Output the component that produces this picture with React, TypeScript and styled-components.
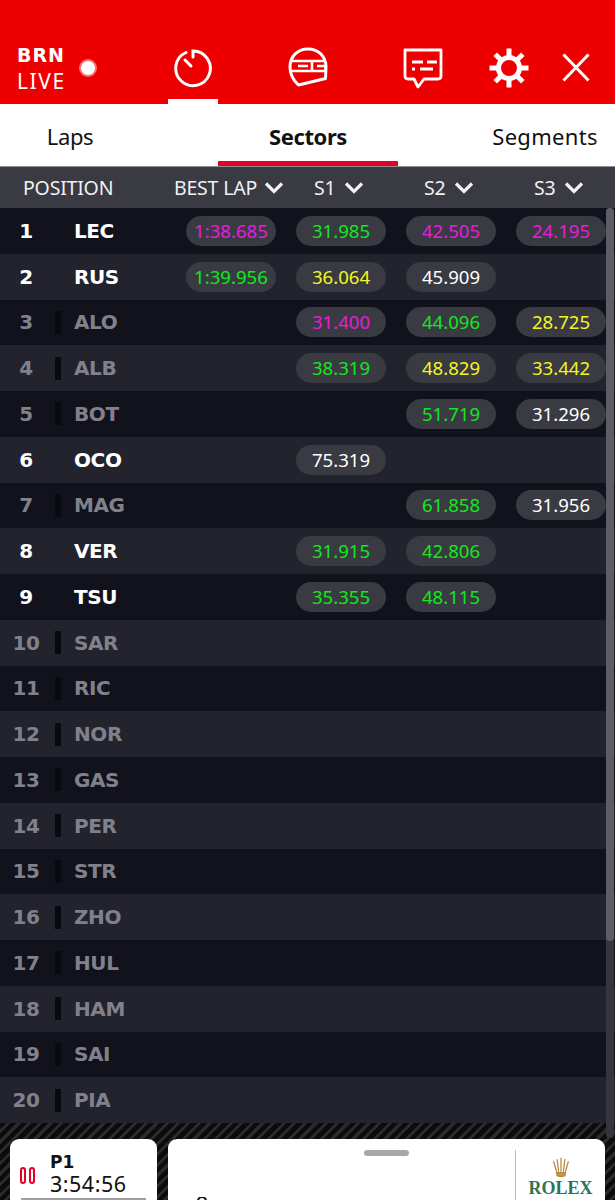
import React from "react";
import styled, { createGlobalStyle } from "styled-components";

const Global = createGlobalStyle`
  html, body { margin: 0; padding: 0; background: #11121c; }
  * { box-sizing: border-box; }
`;

const Page = styled.div`
  width: 615px;
  height: 1200px;
  overflow: hidden;
  position: relative;
  font-family: "Noto Sans", "Open Sans", sans-serif;
  display: flex;
  flex-direction: column;
`;

const Header = styled.header`
  height: 104px;
  background: #ee0000;
  display: flex;
  padding-top: 44px;
  flex: none;
`;

const Brand = styled.div`
  width: 168px;
  padding: 1px 0 0 17px;
  display: flex;
  gap: 15px;
  color: #fff;
`;

const BrandText = styled.div`
  display: flex;
  flex-direction: column;
  gap: 4px;
`;

const BrandCode = styled.span`
  font: 700 19px/20px "DejaVu Sans", sans-serif;
  letter-spacing: 1px;
`;

const BrandLive = styled.span`
  font: 400 21px/24px "Noto Sans", sans-serif;
  letter-spacing: 1.6px;
`;

const LiveDot = styled.span`
  width: 14px;
  height: 14px;
  margin-top: 16px;
  border-radius: 50%;
  background: #fff;
  box-shadow: 0 0 0 2px rgba(255, 255, 255, 0.45);
`;

const IconSlot = styled.div<{ $w: number; $ml?: number; $active?: boolean }>`
  width: ${(p) => p.$w}px;
  margin-left: ${(p) => p.$ml ?? 0}px;
  height: 60px;
  display: flex;
  justify-content: center;
  padding-top: 1px;
  position: relative;
  ${(p) =>
    p.$active &&
    `&::after { content: ""; position: absolute; left: 0; right: 0; bottom: 0; height: 5px; background: #fff; }`}
`;

const Tabs = styled.nav`
  height: 62px;
  background: #fff;
  display: flex;
  flex: none;
  position: relative;
  overflow: hidden;
  &::after {
    content: "";
    position: absolute;
    right: 0;
    top: 0;
    bottom: 0;
    width: 22px;
    background: linear-gradient(to right, rgba(255, 255, 255, 0), rgba(255, 255, 255, 0.75));
  }
`;

const Tab = styled.div<{ $active?: boolean; $w: number; $ls?: number }>`
  width: ${(p) => p.$w}px;
  flex: none;
  display: flex;
  align-items: center;
  justify-content: center;
  white-space: nowrap;
  color: #111;
  font-size: 22px;
  letter-spacing: ${(p) => p.$ls ?? -0.4}px;
  font-weight: ${(p) => (p.$active ? 700 : 400)};
  padding-top: 6px;
  border-bottom: 5px solid ${(p) => (p.$active ? "#e4002b" : "transparent")};
`;

const TabDivider = styled.div`
  height: 1px;
  background: #8d8e93;
  flex: none;
`;

const ColumnBar = styled.div`
  height: 41px;
  background: #393a42;
  color: #f1f1f3;
  display: flex;
  align-items: center;
  flex: none;
  font-size: 19.5px;
  letter-spacing: -0.2px;
`;

const PositionHead = styled.div`
  width: 174px;
  padding-left: 23px;
`;

const ColumnHead = styled.div<{ $w: number; $gap: number }>`
  width: ${(p) => p.$w}px;
  display: flex;
  align-items: center;
  gap: ${(p) => p.$gap}px;
  flex: none;
`;

const Table = styled.div`
  flex: none;
  height: 915px;
  position: relative;
`;

const Row = styled.div<{ $odd: boolean }>`
  height: 45.75px;
  background: ${(p) => (p.$odd ? "#11121c" : "#22232d")};
  display: flex;
  align-items: center;
`;

const Pos = styled.div<{ $dim: boolean }>`
  width: 52px;
  text-align: center;
  font: 700 20px/1 "DejaVu Sans", sans-serif;
  color: ${(p) => (p.$dim ? "#80818b" : "#fff")};
  letter-spacing: -0.3px;
`;

const Mark = styled.span<{ $show: boolean }>`
  width: 6px;
  height: 23px;
  margin-left: 3px;
  background: ${(p) => (p.$show ? "#090a10" : "transparent")};
  flex: none;
`;

const Code = styled.div<{ $dim: boolean }>`
  width: 112px;
  margin-left: 13px;
  font: 700 20px/1 "DejaVu Sans", sans-serif;
  color: ${(p) => (p.$dim ? "#80818b" : "#fff")};
  letter-spacing: -0.4px;
`;

const Cells = styled.div`
  display: flex;
  gap: 20px;
  flex: none;
`;

const Pill = styled.div<{ $c: string }>`
  width: 90px;
  height: 30px;
  border-radius: 15px;
  background: #393a42;
  color: ${(p) => p.$c};
  font-size: 18.6px;
  line-height: 30px;
  text-align: center;
`;

const EmptyCell = styled.div`
  width: 90px;
  height: 30px;
`;

const ScrollTrack = styled.div`
  position: absolute;
  right: 1px;
  top: 0;
  width: 8px;
  height: 930px;
  border-radius: 4px;
  background: #34353e;
`;

const ScrollThumb = styled.div`
  width: 8px;
  height: 733px;
  border-radius: 4px;
  background: #5c5d66;
`;

const Footer = styled.footer`
  flex: 1;
  display: flex;
  gap: 11px;
  padding: 16px 10px 0;
  background: repeating-linear-gradient(135deg, #0c0c0e 0 4.5px, #2b2b2d 4.5px 7.5px);
`;

const TimerCard = styled.div`
  width: 147px;
  height: 80px;
  background: #fff;
  border-radius: 9px 9px 0 0;
  padding: 14px 0 0 10px;
  display: flex;
  gap: 15px;
  position: relative;
`;

const PauseIcon = styled.div`
  display: flex;
  gap: 3px;
  margin-top: 14px;
  height: 17px;
  flex: none;
`;

const PauseBar = styled.span`
  width: 6px;
  height: 17px;
  border: 2px solid #e4002b;
  border-radius: 3px;
`;

const TimerText = styled.div`
  display: flex;
  flex-direction: column;
  gap: 1px;
  color: #111;
`;

const TimerPos = styled.span`
  font: 700 17px/19px "DejaVu Sans", sans-serif;
`;

const TimerClock = styled.span`
  font-size: 21.500px;
  line-height: 22px;
  letter-spacing: 0.5px;
`;

const TimerBar = styled.div`
  position: absolute;
  left: 11px;
  right: 11px;
  top: 59px;
  height: 3px;
  background: #a0a0a0;
`;

const MainCard = styled.div`
  width: 437px;
  height: 80px;
  background: #fff;
  border-radius: 9px 9px 0 0;
  position: relative;
  display: flex;
  justify-content: flex-end;
`;

const Handle = styled.div`
  position: absolute;
  left: 196px;
  top: 11px;
  width: 45px;
  height: 6px;
  border-radius: 3px;
  background: #a8a8a8;
`;

const Pin = styled.svg`
  position: absolute;
  left: 29px;
  top: 58px;
`;

const Sponsor = styled.div`
  width: 90px;
  height: 50px;
  margin-top: 11px;
  border-left: 1.5px solid #bdbdbd;
  display: flex;
  flex-direction: column;
  align-items: center;
  padding-top: 6px;
`;

const Rolex = styled.span`
  font: 700 18px/20px "Liberation Serif", serif;
  color: #2f7355;
  letter-spacing: 0;
  margin-top: 1px;
`;

const W = "#fff";
const M = "#ea1ade";
const G = "#12e81c";
const Y = "#f5f51e";

type C = [string, string] | null;
const rows: { p: number; n: string; lit: boolean; t: C[] }[] = [
  { p: 1, n: "LEC", lit: true, t: [["1:38.685", M], ["31.985", G], ["42.505", M], ["24.195", M]] },
  { p: 2, n: "RUS", lit: true, t: [["1:39.956", G], ["36.064", Y], ["45.909", W], null] },
  { p: 3, n: "ALO", lit: false, t: [null, ["31.400", M], ["44.096", G], ["28.725", Y]] },
  { p: 4, n: "ALB", lit: false, t: [null, ["38.319", G], ["48.829", Y], ["33.442", Y]] },
  { p: 5, n: "BOT", lit: false, t: [null, null, ["51.719", G], ["31.296", W]] },
  { p: 6, n: "OCO", lit: true, t: [null, ["75.319", W], null, null] },
  { p: 7, n: "MAG", lit: false, t: [null, null, ["61.858", G], ["31.956", W]] },
  { p: 8, n: "VER", lit: true, t: [null, ["31.915", G], ["42.806", G], null] },
  { p: 9, n: "TSU", lit: true, t: [null, ["35.355", G], ["48.115", G], null] },
  ...["SAR", "RIC", "NOR", "GAS", "PER", "STR", "ZHO", "HUL", "HAM", "SAI", "PIA"].map((n, i) => ({
    p: i + 10,
    n,
    lit: false,
    t: [null, null, null, null] as C[],
  })),
];

const Chevron = () => (
  <svg width="20" height="13" viewBox="0 0 20 13" fill="none">
    <path d="M2 2.500 10 10.500 18 2.500" stroke="#f1f1f3" strokeWidth="3.2" />
  </svg>
);

const Stopwatch = () => (
  <svg width="40" height="46" viewBox="0 0 40 46" fill="none" stroke="#fff" strokeWidth="3" strokeLinecap="round">
    <path d="M13 7.500A17.300 17.300 0 1 0 20 6V12" />
    <path d="M12 15 18 21" />
  </svg>
);

const Helmet = () => (
  <svg width="40" height="46" viewBox="0 0 40 46" fill="none" stroke="#fff" strokeWidth="3" strokeLinejoin="round">
    <path d="M37.500 33.500 10.500 40C5 35 2 29 2 22 2 11 10 4 20 4 31 4 38 12 38 22Z" />
    <path d="M3 16H24V26H3M10 21H20M24 16H37M29 21H37.500V26H24" strokeWidth="2.6" />
  </svg>
);

const Chat = () => (
  <svg width="40" height="46" viewBox="0 0 40 46" fill="none" stroke="#fff" strokeWidth="2.8" strokeLinejoin="round">
    <path d="M2 5H38V31C38 33 37 34 35 34H21L15 42 11 34H5C3 34 2 33 2 31Z" />
    <path d="M9 17H20M24 17H34M9 24H12M17 24H30" />
  </svg>
);

const Gear = () => (
  <svg width="42" height="46" viewBox="0 0 42 46" fill="none" stroke="#fff">
    <circle cx="21" cy="23" r="10.500" strokeWidth="5" />
    <path
      d="M21 3.500V11M21 35V42.500M1.500 23H9M33 23H40.500M7.200 9.200 12.500 14.500M29.500 31.500 34.800 36.800M34.800 9.200 29.500 14.500M12.500 31.500 7.200 36.800"
      strokeWidth="5"
    />
  </svg>
);

const Close = () => (
  <svg width="28" height="46" viewBox="0 0 28 46" fill="none" stroke="#fff" strokeWidth="3">
    <path d="M1.500 9.500 26.500 35.500M26.500 9.500 1.500 35.500" />
  </svg>
);

const Crown = () => (
  <svg width="18" height="21" viewBox="0 0 20 24" fill="none" stroke="#b8873a" strokeWidth="1.4">
    <path d="M5 18 1.500 6M7.300 18 5.500 3.500M10 18V2M12.700 18 14.500 3.500M15 18 18.500 6" />
    <path d="M5 19H15L14.500 22.500C12 23.500 8 23.500 5.500 22.500Z" fill="#c99a4c" />
  </svg>
);

export default function App() {
  return (
    <Page>
      <Global />
      <Header>
        <Brand>
          <BrandText>
            <BrandCode>BRN</BrandCode>
            <BrandLive>LIVE</BrandLive>
          </BrandText>
          <LiveDot />
        </Brand>
        <IconSlot $w={50} $active><Stopwatch /></IconSlot>
        <IconSlot $w={180}><Helmet /></IconSlot>
        <IconSlot $w={50}><Chat /></IconSlot>
        <IconSlot $w={90} $ml={16}><Gear /></IconSlot>
        <IconSlot $w={44}><Close /></IconSlot>
      </Header>
      <Tabs>
        <Tab $w={140}>Laps</Tab>
        <Tab $w={78} />
        <Tab $w={180} $active>Sectors</Tab>
        <Tab $w={81} />
        <Tab $w={132} $ls={0.3}>Segments</Tab>
      </Tabs>
      <TabDivider />
      <ColumnBar>
        <PositionHead>POSITION</PositionHead>
        <ColumnHead $w={140} $gap={7}>BEST LAP <Chevron /></ColumnHead>
        <ColumnHead $w={110} $gap={9}>S1 <Chevron /></ColumnHead>
        <ColumnHead $w={110} $gap={9}>S2 <Chevron /></ColumnHead>
        <ColumnHead $w={80} $gap={9}>S3 <Chevron /></ColumnHead>
      </ColumnBar>
      <Table>
        {rows.map((r, i) => (
          <Row key={r.p} $odd={i % 2 === 0}>
            <Pos $dim={!r.lit}>{r.p}</Pos>
            <Mark $show={!r.lit} />
            <Code $dim={!r.lit}>{r.n}</Code>
            <Cells>
              {r.t.map((c, j) =>
                c ? <Pill key={j} $c={c[1]}>{c[0]}</Pill> : <EmptyCell key={j} />
              )}
            </Cells>
          </Row>
        ))}
        <ScrollTrack><ScrollThumb /></ScrollTrack>
      </Table>
      <Footer>
        <TimerCard>
          <PauseIcon><PauseBar /><PauseBar /></PauseIcon>
          <TimerText>
            <TimerPos>P1</TimerPos>
            <TimerClock>3:54:56</TimerClock>
          </TimerText>
          <TimerBar />
        </TimerCard>
        <MainCard>
          <Handle />
          <Pin width="10" height="8" viewBox="0 0 10 8"><path d="M1 8V4a4 4 0 0 1 8 0v4" fill="none" stroke="#111" strokeWidth="2" /></Pin>
          <Sponsor>
            <Crown />
            <Rolex>ROLEX</Rolex>
          </Sponsor>
        </MainCard>
      </Footer>
    </Page>
  );
}
